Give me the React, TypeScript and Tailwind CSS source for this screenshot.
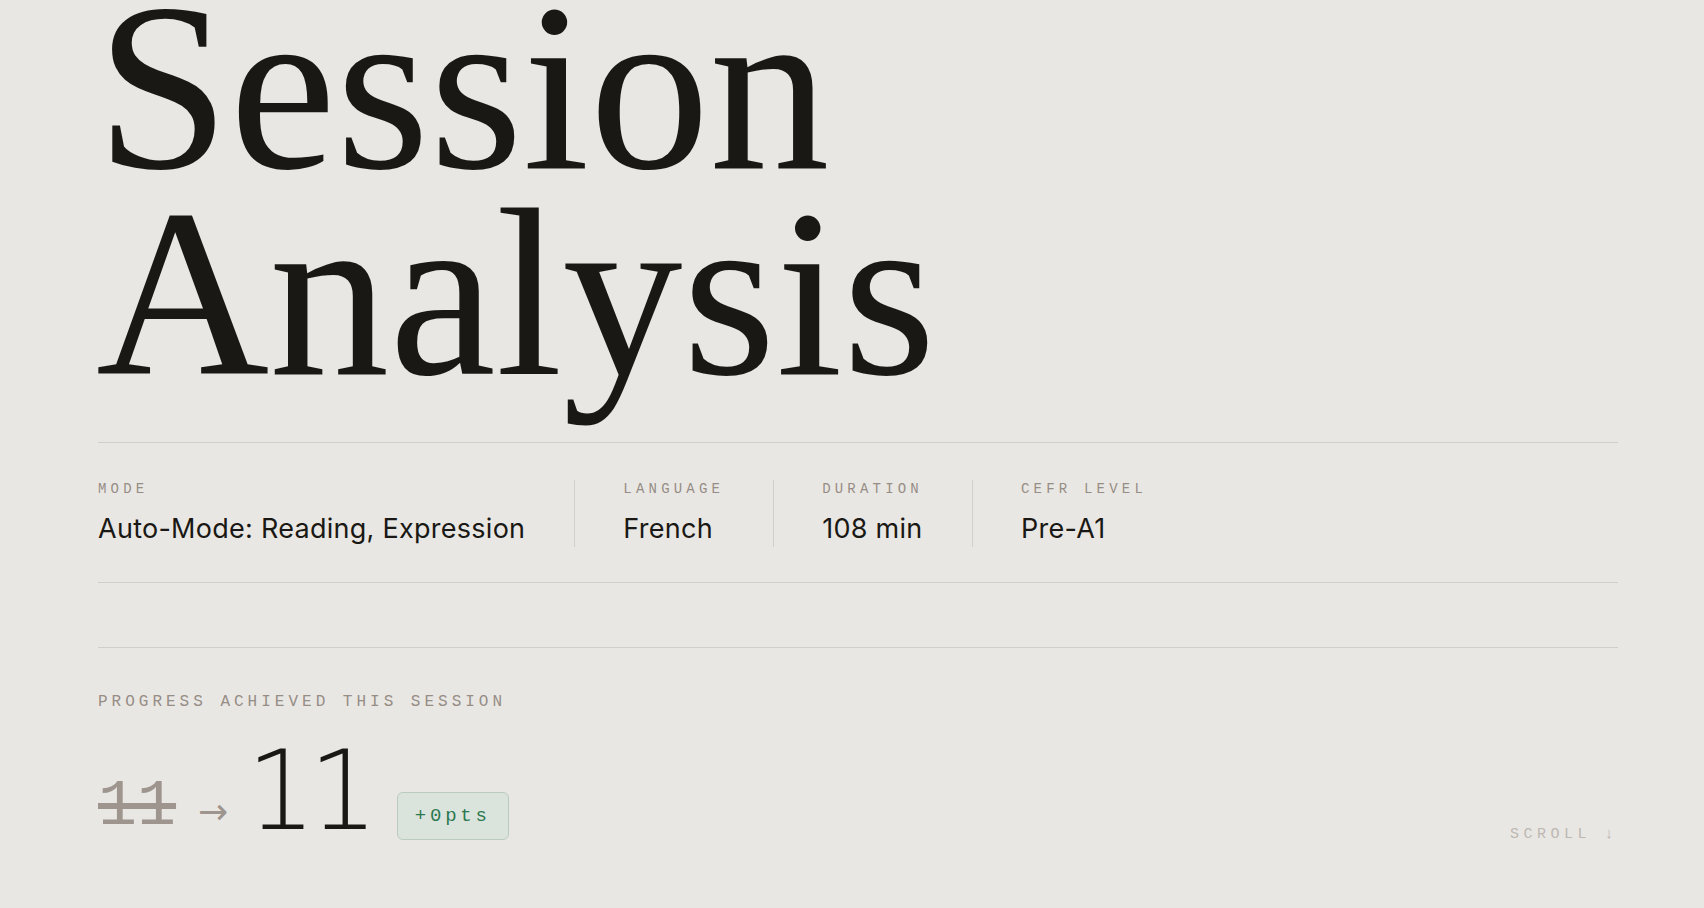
import React from 'react';

const stats = [
  { label: 'Mode', value: 'Auto-Mode: Reading, Expression' },
  { label: 'Language', value: 'French' },
  { label: 'Duration', value: '108 min' },
  { label: 'CEFR Level', value: 'Pre-A1' },
];

const mono = "font-['Liberation_Mono','DejaVu_Sans_Mono',monospace]";

export default function App() {
  return (
    <div className="relative min-h-screen overflow-hidden bg-[#e9e7e3] text-[#1a1814]">
      <main className="pl-[98px] pr-[86px]">
        {/* Title */}
        <h1 className="-mt-[16px] mb-[46px] -ml-[2px] font-['Liberation_Serif',serif] text-[240px] leading-[206px] font-normal">
          <span className="block">Session</span>
          <span className="block">Analysis</span>
        </h1>

        {/* Session meta */}
        <section className="flex border-y border-[#d2cfca] pt-[37px] pb-[35px]">
          {stats.map((s, i) => (
            <div
              key={s.label}
              className={
                i === 0
                  ? 'flex flex-col pr-[49px]'
                  : 'flex flex-col border-l border-[#d2cfca] pl-[48px] pr-[49px]'
              }
            >
              <span className={`${mono} text-[14px] leading-[18px] uppercase tracking-[0.3em] text-[#968d86]`}>
                {s.label}
              </span>
              <span className="mt-[13px] font-['Inter',sans-serif] text-[27px] leading-[36px] tracking-[0.01em] text-[#1a1814]">
                {s.value}
              </span>
            </div>
          ))}
        </section>

        {/* Progress */}
        <section className="mt-[64px] border-t border-[#d2cfca] pt-[42px]">
          <p className={`${mono} text-[16px] leading-[24px] uppercase tracking-[0.25em] text-[#968d86]`}>
            Progress achieved this session
          </p>
          <div className="mt-[35px] flex items-end">
            <span className={`${mono} mb-[3px] text-[65px] leading-[65px] text-[#9e958e] line-through decoration-[6px]`}>
              11
            </span>
            <span className="mb-[13px] ml-[22px] font-['DejaVu_Sans',sans-serif] text-[36px] leading-[36px] text-[#9e958e]">
              →
            </span>
            <span className="mb-[10px] ml-[18px] font-['DejaVu_Sans',sans-serif] text-[110px] leading-[84px] font-extralight tracking-[-0.07em] text-[#1a1814]">
              11
            </span>
            <span className={`${mono} mb-[3px] ml-[26px] rounded-[6px] border border-[#b9cdbe] bg-[#dbe4dc] px-[17px] py-[11px] text-[19px] leading-[24px] tracking-[0.2em] text-[#2b7850]`}>
              +0pts
            </span>
          </div>
        </section>
      </main>

      <div className={`${mono} absolute bottom-[63px] right-[86px] text-[15px] leading-[20px] uppercase tracking-[0.3em] text-[#bdb8b2]`}>
        Scroll ↓
      </div>
    </div>
  );
}
